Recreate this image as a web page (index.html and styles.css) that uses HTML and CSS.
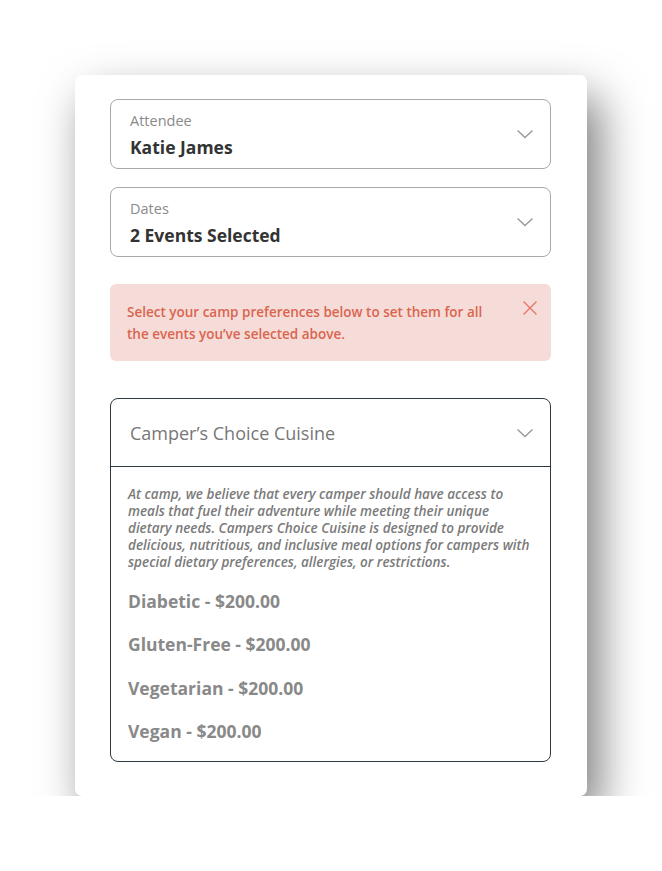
FILE: index.html
```html
<!DOCTYPE html>
<html lang="en">
<head>
<meta charset="utf-8">
<link rel="stylesheet" href="styles.css">
</head>
<body>
<div class="page">
  <div class="card">
    <div class="field">
      <div class="field-text">
        <div class="field-label">Attendee</div>
        <div class="field-value">Katie James</div>
      </div>
      <svg class="chev" width="18" height="10" viewBox="0 0 18 10"><path d="M1.5 1.5 L9 8.5 L16.5 1.5" fill="none" stroke="#9a9a9a" stroke-width="1.4"/></svg>
    </div>
    <div class="field field-dates">
      <div class="field-text">
        <div class="field-label">Dates</div>
        <div class="field-value">2 Events Selected</div>
      </div>
      <svg class="chev" width="18" height="10" viewBox="0 0 18 10"><path d="M1.5 1.5 L9 8.5 L16.5 1.5" fill="none" stroke="#9a9a9a" stroke-width="1.4"/></svg>
    </div>
    <div class="alert">
      <p class="alert-text">Select your camp preferences below to set them for all the events you’ve selected above.</p>
      <svg class="close" width="16" height="16" viewBox="0 0 16 16"><path d="M1.5 1.5 L14.5 14.5 M14.5 1.5 L1.5 14.5" fill="none" stroke="#e0776a" stroke-width="1.4"/></svg>
    </div>
    <div class="accordion">
      <div class="acc-head">
        <span class="acc-title">Camper’s Choice Cuisine</span>
        <svg class="chev" width="18" height="10" viewBox="0 0 18 10"><path d="M1.5 1.5 L9 8.5 L16.5 1.5" fill="none" stroke="#9a9a9a" stroke-width="1.4"/></svg>
      </div>
      <div class="acc-body">
        <p class="acc-desc">At camp, we believe that every camper should have access to meals that fuel their adventure while meeting their unique dietary needs. Campers Choice Cuisine is designed to provide delicious, nutritious, and inclusive meal options for campers with special dietary preferences, allergies, or restrictions.</p>
        <ul class="options">
          <li>Diabetic - $200.00</li>
          <li>Gluten-Free - $200.00</li>
          <li>Vegetarian - $200.00</li>
          <li>Vegan - $200.00</li>
        </ul>
      </div>
    </div>
  </div>
</div>
</body>
</html>
```

FILE: styles.css
```css
* { box-sizing: border-box; }
html, body { margin: 0; padding: 0; background: #ffffff; }
body { font-family: "Open Sans", "Liberation Sans", sans-serif; }
.page { padding: 75px 75px 0 75px; }
.card {
  width: 512px;
  height: 721px;
  background: #fff;
  border-radius: 7px;
  box-shadow: 12px 22px 46px rgba(0,0,0,0.52);
  padding: 24px 36px 0 35px;
  display: flex;
  flex-direction: column;
}
.field {
  height: 70px;
  flex: none;
  border: 1px solid #a9a9a9;
  border-radius: 8px;
  padding: 12px 16px 0 19px;
  display: flex;
  align-items: center;
  justify-content: space-between;
}
.field-text { align-self: flex-start; }
.field-dates { margin-top: 18px; }
.field-label {
  font-size: 14.5px;
  line-height: 18px;
  color: #8a8a8a;
}
.field-value {
  margin-top: 5px;
  font-size: 17.5px;
  line-height: 24px;
  font-weight: 700;
  color: #333;
}
.chev { display: block; margin-top: -12px; flex: none; }
.alert {
  margin-top: 27px;
  height: 77px;
  flex: none;
  background: #f6dcd9;
  border-radius: 6px;
  padding: 16px 13px 0 17px;
  display: flex;
  justify-content: space-between;
  align-items: flex-start;
}
.alert-text {
  margin: 1px 0 0 0;
  width: 366px;
  font-size: 13.5px;
  line-height: 22px;
  font-weight: 600;
  color: #d9654f;
}
.close { display: block; flex: none; }
.accordion {
  margin-top: 37px;
  border: 1px solid #2f3b40;
  border-radius: 8px;
}
.acc-head {
  height: 68px;
  border-bottom: 1px solid #2f3b40;
  display: flex;
  align-items: center;
  justify-content: space-between;
  padding: 0 16px 0 19px;
}
.acc-head .chev { margin-top: 0; }
.acc-title {
  font-size: 18px;
  color: #777;
}
.acc-body { padding: 19px 14px 18px 17px; }
.acc-desc {
  margin: 0;
  font-size: 13.5px;
  line-height: 17px;
  font-style: italic;
  font-weight: 600;
  color: #7a7a7a;
}
.options {
  list-style: none;
  margin: 0;
  padding: 0;
}
.options li {
  margin-top: 19.5px;
  font-size: 17.5px;
  line-height: 24px;
  font-weight: 700;
  color: #898989;
}
.options li:first-child { margin-top: 17.5px; }
```
